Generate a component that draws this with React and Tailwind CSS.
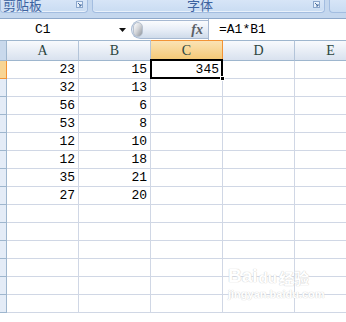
import React from "react";

const mono = { fontFamily: '"Liberation Mono", "DejaVu Sans Mono", monospace' };
const serif = { fontFamily: '"Liberation Serif", "DejaVu Serif", serif' };

const cols = ["A", "B", "C", "D", "E"];
const data = [
  [23, 15],
  [32, 13],
  [56, 6],
  [53, 8],
  [12, 10],
  [12, 18],
  [35, 21],
  [27, 20],
];
const rowCount = 14;

const Launcher = () => (
  <svg width="7" height="7" viewBox="0 0 7 7" className="absolute right-[4px] top-[1px]">
    <rect x="0.5" y="0.5" width="6" height="6" fill="#e9f1fb" stroke="#8aa6cc" />
    <path d="M2 2 L5 5 M5 3 L5 5 L3 5" stroke="#4a6f9f" strokeWidth="1" fill="none" />
  </svg>
);

const Group = ({ label, width, labelPad }) => (
  <div
    className="relative h-[13px] overflow-hidden rounded-b-[4px] border border-t-0 border-[#a3bde0] bg-gradient-to-b from-[#d7e5f7] to-[#c9dcf2] shadow-[inset_0_-1px_0_#e9f1fb]"
    style={{ width }}
  >
    <div
      className="absolute bottom-[1px] text-[13px] leading-[13px] text-[#3d63a0]"
      style={{ left: labelPad, fontFamily: '"Noto Sans CJK SC", sans-serif' }}
    >
      {label}
    </div>
    <Launcher />
  </div>
);

export default function App() {
  return (
    <div className="relative h-[322px] w-[346px] overflow-hidden bg-white" style={mono}>
      {/* ribbon strip */}
      <div className="flex h-[18px] gap-[4px] bg-[#c4d7ee]">
        <Group label="剪贴板" width={88} labelPad={2} />
        <Group label="字体" width={233} labelPad={94} />
        <div className="h-[13px] flex-1 rounded-bl-[4px] border border-r-0 border-t-0 border-[#a3bde0] bg-gradient-to-b from-[#d7e5f7] to-[#c9dcf2]" />
      </div>

      {/* formula bar */}
      <div className="flex h-[22px] border-t border-[#8ea8ca] bg-white">
        <div className="relative flex w-[131px] items-center">
          <span className="pl-[35px] text-[13px] leading-none text-black">C1</span>
          <svg width="7" height="4" viewBox="0 0 7 4" className="absolute left-[119px] top-[9px]">
            <path d="M0 0 H7 L3.5 4 Z" fill="#111" />
          </svg>
        </div>
        <div className="my-[1px] flex w-[77px] items-center justify-between rounded-l-full border border-r-0 border-[#a7b9d2] bg-gradient-to-b from-[#fbfcfe] via-[#e8eef7] to-[#cfdbea] pr-[5px]">
          <div className="ml-[1px] h-[15px] w-[10px] rounded-full border border-[#b8c2cf] bg-gradient-to-br from-[#ffffff] via-[#d2d4d8] to-[#8e949c]" />
          <span className="text-[14px] font-bold italic leading-none text-[#5b5f66]" style={serif}>
            fx
          </span>
        </div>
        <div className="w-px bg-[#a7b9d2]" />
        <div className="flex flex-1 items-center pl-[10px] text-[13px] leading-none text-black">=A1*B1</div>
      </div>

      {/* grid */}
      <div className="grid grid-cols-[7px_72px_72px_72px_72px_72px]">
        {/* header row */}
        <div className="h-[21px] border-y border-r border-[#9eb6ce] bg-[#c9d9ec]" />
        {cols.map((c) => (
          <div
            key={c}
            style={serif}
            className={
              c === "C"
                ? "flex h-[21px] items-center justify-center border-y border-r border-[#f29436] bg-gradient-to-b from-[#fbe3b4] to-[#f4c873] text-[14px] leading-none text-[#2c4640]"
                : "flex h-[21px] items-center justify-center border-y border-r border-t-[#9eb6ce] border-b-[#9eb6ce] border-r-[#b3c4d9] bg-gradient-to-b from-[#f8fafd] to-[#d9e2ef] text-[14px] leading-none text-[#2c4640]"
            }
          >
            {c}
          </div>
        ))}

        {Array.from({ length: rowCount }).map((_, r) => (
          <React.Fragment key={r}>
            <div
              className={
                r === 0
                  ? "h-[18px] border-b border-r border-b-[#f29436] border-r-[#f29436] bg-[#f8d594]"
                  : "h-[18px] border-b border-r border-[#9eb6ce] bg-[#e4ecf7]"
              }
            />
            {cols.map((c, ci) => {
              let v = "";
              if (ci < 2 && data[r]) v = data[r][ci];
              if (r === 0 && c === "C") v = 345;
              return (
                <div
                  key={c}
                  className="flex h-[18px] items-end justify-end border-b border-r border-[#d0d7e5] pb-[2px] pr-[3px] text-[13px] leading-none text-black"
                >
                  {v}
                </div>
              );
            })}
          </React.Fragment>
        ))}
      </div>

      {/* active cell */}
      <div className="absolute left-[150px] top-[59px] h-[20px] w-[73px] border-2 border-black" />
      <div className="absolute left-[220px] top-[76px] h-[5px] w-[5px] border border-white bg-black" />

      {/* watermark */}
      <div className="pointer-events-none absolute left-[228px] top-[266px] select-none" style={{ fontFamily: '"Liberation Sans", sans-serif' }}>
        <div className="flex items-end gap-[1px]">
          <span className="text-[19px] font-bold leading-none text-white [text-shadow:0_0_1px_#cfcfcf,0_0_1px_#cfcfcf]">Bai</span>
          <span className="text-[15px] font-bold leading-none text-white [text-shadow:0_0_1px_#cfcfcf,0_0_1px_#cfcfcf]">du</span>
          <span
            className="ml-[1px] text-[15px] font-bold leading-none text-white [text-shadow:0_0_1px_#cfcfcf,0_0_1px_#cfcfcf]"
            style={{ fontFamily: '"Noto Sans CJK SC", sans-serif' }}
          >
            经验
          </span>
        </div>
        <div className="mt-[4px] text-[11px] font-bold leading-none text-white [text-shadow:0_0_1px_#d4d4d4,0_0_1px_#d4d4d4]">
          jingyan.baidu.com
        </div>
      </div>
    </div>
  );
}
